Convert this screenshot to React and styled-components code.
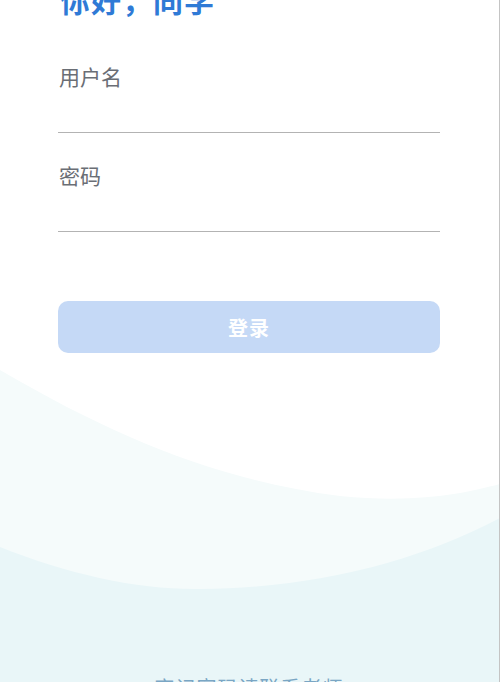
import React from 'react';
import styled, { createGlobalStyle } from 'styled-components';

const GlobalStyle = createGlobalStyle`
  html, body {
    margin: 0;
    padding: 0;
    background: #ffffff;
  }
  * { box-sizing: border-box; }
`;

const Screen = styled.div`
  position: relative;
  width: 500px;
  height: 682px;
  overflow: hidden;
  background: #ffffff;
  border-right: 1px solid #c4c4c4;
  font-family: "Noto Sans CJK SC", "Noto Sans", sans-serif;
`;

const Waves = styled.svg`
  position: absolute;
  left: 0;
  top: 0;
  width: 500px;
  height: 682px;
  z-index: 0;
`;

const Content = styled.div`
  position: relative;
  z-index: 1;
  padding: 0 59px 0 58px;
  display: flex;
  flex-direction: column;
`;

const Title = styled.h1`
  margin: -21px 0 0 2px;
  font-size: 30px;
  line-height: 40px;
  font-weight: 700;
  color: #2f7ad6;
  letter-spacing: 1px;
`;

const Field = styled.div`
  display: flex;
  flex-direction: column;
  margin-top: ${p => p.gap}px;
`;

const Label = styled.label`
  font-size: 21px;
  line-height: 30px;
  color: #6a6e75;
  padding-left: 1px;
`;

const Input = styled.input`
  height: 42px;
  border: none;
  border-bottom: 1px solid #b3b3b3;
  outline: none;
  background: transparent;
  font-size: 18px;
  font-family: inherit;
  padding: 0;
`;

const Button = styled.button`
  margin-top: 69px;
  height: 52px;
  border: none;
  border-radius: 10px;
  background: #c5d9f6;
  color: #ffffff;
  font-family: inherit;
  font-size: 20px;
  font-weight: 700;
  letter-spacing: 1px;
`;

const Footer = styled.div`
  margin-top: 321px;
  text-align: center;
  font-size: 20px;
  line-height: 28px;
  letter-spacing: 1px;
  color: #7aa6c4;
`;

export default function App() {
  return (
    <>
      <GlobalStyle />
      <Screen>
        <Waves viewBox="0 0 500 682" preserveAspectRatio="none">
          <path
            d="M0 370 C 120 440, 220 480, 340 496 C 420 504, 470 492, 500 484 L 500 682 L 0 682 Z"
            fill="#f5fbfb"
          />
          <path
            d="M0 547 C 70 575, 140 590, 200 589 C 320 588, 420 560, 500 518 L 500 682 L 0 682 Z"
            fill="#e9f6f8"
          />
        </Waves>
        <Content>
          <Title>你好，同学</Title>
          <Field gap={42}>
            <Label>用户名</Label>
            <Input type="text" />
          </Field>
          <Field gap={27}>
            <Label>密码</Label>
            <Input type="password" />
          </Field>
          <Button>登录</Button>
          <Footer>忘记密码请联系老师</Footer>
        </Content>
      </Screen>
    </>
  );
}
